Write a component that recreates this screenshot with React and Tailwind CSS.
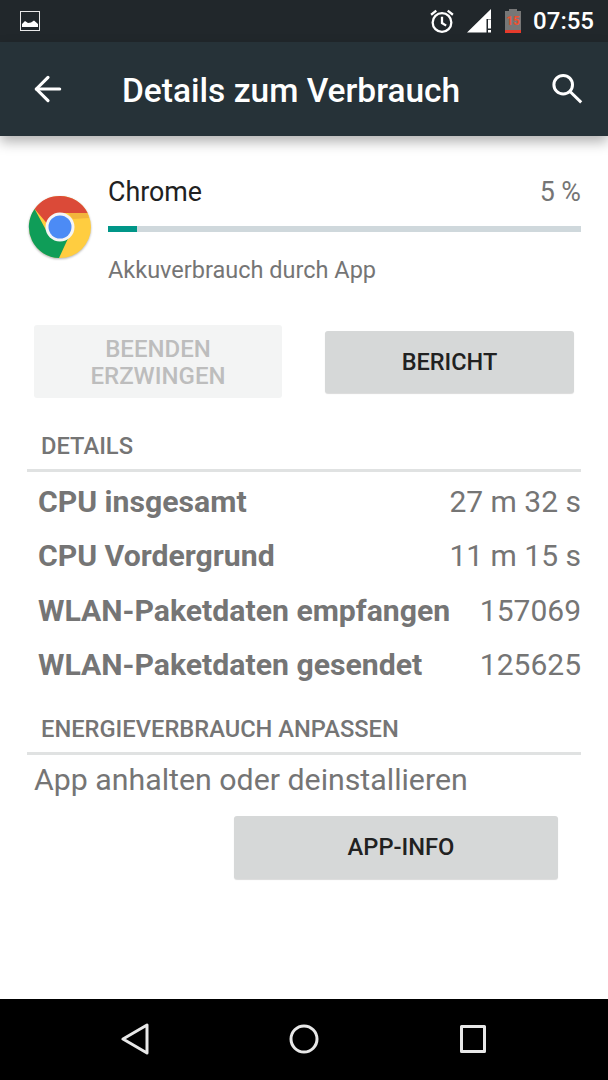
import { ArrowLeft } from 'lucide-react';

const ROWS = [
  ['CPU insgesamt', '27 m 32 s'],
  ['CPU Vordergrund', '11 m 15 s'],
  ['WLAN-Paketdaten empfangen', '157069'],
  ['WLAN-Paketdaten gesendet', '125625'],
];

function ChromeLogo() {
  return (
    <svg width="64" height="64" viewBox="0 0 64 64" className="mt-[21px] shrink-0 drop-shadow-[0_1px_1px_rgba(0,0,0,0.3)]">
      <circle cx="32" cy="32" r="31" fill="#ffcd40" />
      <path d="M32 1a31 31 0 0 1 27.6 17H32a14 14 0 0 0-13.4 10L6.6 14A31 31 0 0 1 32 1z" fill="#db4a38" />
      <path d="M6.600 14L19.600 38A14 14 0 0 0 40 43.500L31 63A31 31 0 0 1 6.600 14z" fill="#0f9d58" />
      <path d="M59.600 18H40l5 6 16-1z" fill="#eaa53a" opacity="0.6" />
      <circle cx="32" cy="32" r="14.500" fill="#f5f5f5" />
      <circle cx="32" cy="32" r="11.500" fill="#4c8bf5" />
    </svg>
  );
}

function SectionHead({ children }) {
  return (
    <div className="mx-[27px] flex h-[37px] items-center border-b-[3px] border-[#e0e2e2] pb-[11px] pl-[14px] text-[23.700px] font-medium text-[#757575]">
      {children}
    </div>
  );
}

export default function App() {
  return (
    <div className="flex h-[1080px] w-[608px] flex-col overflow-hidden bg-white font-['Roboto',sans-serif]">
      <div className="flex h-[42px] shrink-0 items-center bg-[#21272b] pl-[20px] pr-[14px] text-white">
        <svg width="20" height="20" viewBox="0 0 20 20" fill="none">
          <rect x="0.500" y="0.500" width="19" height="19" stroke="#e8e8e8" />
          <path d="M2 16v-3l3-3 3 2 3-.5 3-2 4 3.500V16z" fill="#ffffff" />
        </svg>
        <div className="ml-auto flex items-center">
          <svg width="28" height="27" viewBox="0 0 26 26" fill="none" stroke="#fff" strokeWidth="2.200" className="mr-[11px]">
            <circle cx="13" cy="14" r="9" />
            <path d="M13 8.500v6l4 2.500M2.500 6.500l5-4M23.500 6.500l-5-4" />
          </svg>
          <svg width="24" height="26" viewBox="0 0 24 26" className="mr-[14px]">
            <path d="M0 24.500L24 1v10h-4.500v13.500z" fill="#fff" />
            <path d="M21 11.500h3v9h-3zM21 22h3v2.500h-3z" fill="#fff" />
          </svg>
          <div className="relative mr-[12px] h-[24px] w-[16px]">
            <div className="absolute left-[4px] top-0 h-[3px] w-[8px] bg-[#777777]" />
            <div className="absolute inset-x-0 bottom-0 top-[2px] bg-[#777777]" />
            <div className="absolute inset-x-0 bottom-0 h-[3px] bg-[#e53b2c]" />
            <div className="absolute inset-x-0 top-[6px] text-center text-[12px] font-bold leading-[13px] text-[#ef5030]">15</div>
          </div>
          <span className="text-[24px] font-medium leading-none">07:55</span>
        </div>
      </div>

      <div className="flex h-[94px] shrink-0 items-center bg-[#263238] pl-[28px] pr-[23px] text-white shadow-[0_6px_12px_rgba(0,0,0,0.3)]">
        <ArrowLeft size={40} strokeWidth={1.900} />
        <h1 className="ml-[54px] pt-[3px] text-[33.500px] font-medium leading-none">Details zum Verbrauch</h1>
        <svg width="36" height="36" viewBox="0 0 36 36" fill="none" stroke="#fff" strokeWidth="3" className="ml-auto">
          <circle cx="14.200" cy="13.700" r="9.300" />
          <path d="M21 20.500l11.200 10.800" />
        </svg>
      </div>

      <div className="flex min-h-0 flex-1 flex-col">
        <div className="flex items-start pl-[28px] pr-[27px] pt-[38px]">
          <ChromeLogo />
          <div className="ml-[16px] flex-1">
            <div className="flex h-[36px] items-center justify-between">
              <span className="text-[26.800px] text-[#212121]">Chrome</span>
              <span className="text-[26.800px] text-[#757575]">5 %</span>
            </div>
            <div className="mt-[16px] h-[6px] bg-[#cfd8dc]">
              <div className="h-full w-[29px] bg-[#009688]" />
            </div>
            <div className="mt-[22px] text-[23.500px] leading-[32px] text-[#757575]">Akkuverbrauch durch App</div>
          </div>
        </div>

        <div className="mt-[39px] flex items-center pl-[34px]">
          <button className="h-[73px] w-[248px] rounded-[3px] bg-[#f3f4f4] pt-[3px] text-[24px] font-medium leading-[27px] text-[#bdbdbd]">
            BEENDEN<br />ERZWINGEN
          </button>
          <button className="ml-[43px] h-[62px] w-[249px] rounded-[3px] bg-[#d6d8d8] pt-[3px] text-[23.500px] font-medium text-[#212121] shadow-[0_1px_1px_rgba(0,0,0,0.15)]">
            BERICHT
          </button>
        </div>

        <div className="mt-[37px]">
          <SectionHead>DETAILS</SectionHead>
        </div>
        <div className="ml-[38px] mr-[27px] mt-[2px]">
          {ROWS.map(([label, value]) => (
            <div key={label} className="flex h-[54.500px] items-center justify-between text-[30px] text-[#757575]">
              <span className="text-[30.200px] font-bold">{label}</span>
              <span>{value}</span>
            </div>
          ))}
        </div>

        <div className="mt-[26px]">
          <SectionHead>ENERGIEVERBRAUCH ANPASSEN</SectionHead>
        </div>
        <div className="ml-[34px] mt-[7px] text-[30.300px] leading-[36px] text-[#757575]">App anhalten oder deinstallieren</div>
        <button className="ml-[234px] mt-[18px] h-[63px] w-[324px] rounded-[3px] bg-[#d6d8d8] pl-[10px] text-[23.700px] font-medium text-[#212121] shadow-[0_1px_1px_rgba(0,0,0,0.15)]">
          APP-INFO
        </button>
      </div>

      <div className="flex h-[81px] shrink-0 items-center bg-black pb-[2px] pl-[121px]">
        <svg width="28" height="32" viewBox="0 0 28 32" fill="none" stroke="#e8e8e8" strokeWidth="3" strokeLinejoin="round">
          <path d="M2 16L26 2v28z" />
        </svg>
        <svg width="30" height="30" viewBox="0 0 30 30" fill="none" stroke="#e8e8e8" strokeWidth="3" className="ml-[140px]">
          <circle cx="15" cy="15" r="13" />
        </svg>
        <svg width="26" height="28" viewBox="0 0 26 28" fill="none" stroke="#e8e8e8" strokeWidth="3" strokeLinejoin="round" className="ml-[141px]">
          <rect x="1.500" y="1.500" width="23" height="25" />
        </svg>
      </div>
    </div>
  );
}
